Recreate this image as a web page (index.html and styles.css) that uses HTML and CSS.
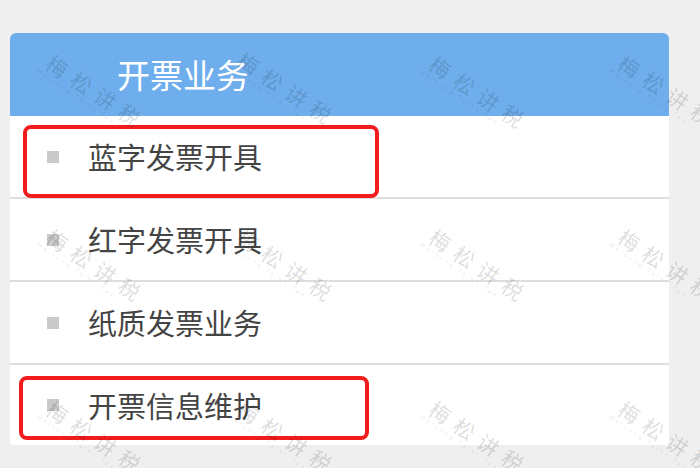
FILE: index.html
```html
<!DOCTYPE html>
<html lang="zh-CN">
<head>
<meta charset="utf-8">
<title>开票业务</title>
<link rel="stylesheet" href="styles.css">
</head>
<body>
<div class="page">
  <div class="card">
    <div class="card-header">开票业务</div>
    <ul class="menu">
      <li class="menu-item"><span class="bullet"></span><span class="label">蓝字发票开具</span></li>
      <li class="menu-item"><span class="bullet"></span><span class="label">红字发票开具</span></li>
      <li class="menu-item"><span class="bullet"></span><span class="label">纸质发票业务</span></li>
      <li class="menu-item"><span class="bullet"></span><span class="label">开票信息维护</span></li>
    </ul>
  </div>
  <div class="mark mark-1"></div>
  <div class="mark mark-2"></div>
  <div class="watermarks">
    <div class="wm" style="left:49px;top:50px"><span class="wm-cn">梅松讲税</span><span class="wm-en">Meisong Talks Tax</span></div>
    <div class="wm" style="left:240px;top:47px"><span class="wm-cn">梅松讲税</span><span class="wm-en">Meisong Talks Tax</span></div>
    <div class="wm" style="left:432px;top:51px"><span class="wm-cn">梅松讲税</span><span class="wm-en">Meisong Talks Tax</span></div>
    <div class="wm" style="left:621px;top:50px"><span class="wm-cn">梅松讲税</span><span class="wm-en">Meisong Talks Tax</span></div>
    <div class="wm" style="left:49px;top:224px"><span class="wm-cn">梅松讲税</span><span class="wm-en">Meisong Talks Tax</span></div>
    <div class="wm" style="left:240px;top:224px"><span class="wm-cn">梅松讲税</span><span class="wm-en">Meisong Talks Tax</span></div>
    <div class="wm" style="left:432px;top:224px"><span class="wm-cn">梅松讲税</span><span class="wm-en">Meisong Talks Tax</span></div>
    <div class="wm" style="left:621px;top:224px"><span class="wm-cn">梅松讲税</span><span class="wm-en">Meisong Talks Tax</span></div>
    <div class="wm" style="left:49px;top:396px"><span class="wm-cn">梅松讲税</span><span class="wm-en">Meisong Talks Tax</span></div>
    <div class="wm" style="left:240px;top:396px"><span class="wm-cn">梅松讲税</span><span class="wm-en">Meisong Talks Tax</span></div>
    <div class="wm" style="left:432px;top:396px"><span class="wm-cn">梅松讲税</span><span class="wm-en">Meisong Talks Tax</span></div>
    <div class="wm" style="left:621px;top:396px"><span class="wm-cn">梅松讲税</span><span class="wm-en">Meisong Talks Tax</span></div>
  </div>
</div>
</body>
</html>
```

FILE: styles.css
```css
html, body {
  margin: 0;
  padding: 0;
}
body {
  background: #efefef;
  font-family: "Noto Sans CJK SC", "Noto Sans", sans-serif;
  width: 700px;
  height: 468px;
  overflow: hidden;
}
.page {
  position: relative;
  width: 700px;
  height: 468px;
  padding: 33px 0 0 10px;
  box-sizing: border-box;
}
.card {
  width: 659px;
  background: #ffffff;
  border-radius: 6px 6px 4px 4px;
  overflow: hidden;
}
.card-header {
  height: 83px;
  background: #6eaeec;
  color: #ffffff;
  font-size: 33px;
  line-height: 83px;
  padding-left: 107px;
  box-sizing: border-box;
}
.menu {
  list-style: none;
  margin: 0;
  padding: 0;
}
.menu-item {
  height: 83px;
  box-sizing: border-box;
  border-bottom: 2px solid #dedede;
  display: flex;
  align-items: center;
  padding-left: 37px;
}
.menu-item:last-child {
  height: 80px;
  border-bottom: none;
}
.bullet {
  width: 12px;
  height: 12px;
  background: #cacaca;
  flex: none;
  margin-right: 29px;
}
.label {
  font-size: 29px;
  color: #444444;
  line-height: 1;
}
.mark {
  position: absolute;
  border: 4px solid #f11d1d;
  border-radius: 8px;
  box-sizing: border-box;
}
.mark-1 {
  left: 23px;
  top: 125px;
  width: 356px;
  height: 73px;
}
.mark-2 {
  left: 19px;
  top: 376px;
  width: 350px;
  height: 64px;
}
.watermarks {
  position: absolute;
  inset: 0;
  pointer-events: none;
}
.wm {
  position: absolute;
  transform: rotate(34deg);
  transform-origin: 0 10px;
  display: flex;
  flex-direction: column;
  align-items: flex-start;
}
.wm-cn {
  font-size: 21px;
  letter-spacing: 8px;
  line-height: 21px;
  color: rgba(0, 0, 0, 0.15);
  white-space: nowrap;
}
.wm-en {
  font-family: "DejaVu Sans", sans-serif;
  font-size: 6px;
  letter-spacing: 2.4px;
  line-height: 8px;
  color: rgba(0, 0, 0, 0.11);
  white-space: nowrap;
  margin-left: -4px;
}
```
